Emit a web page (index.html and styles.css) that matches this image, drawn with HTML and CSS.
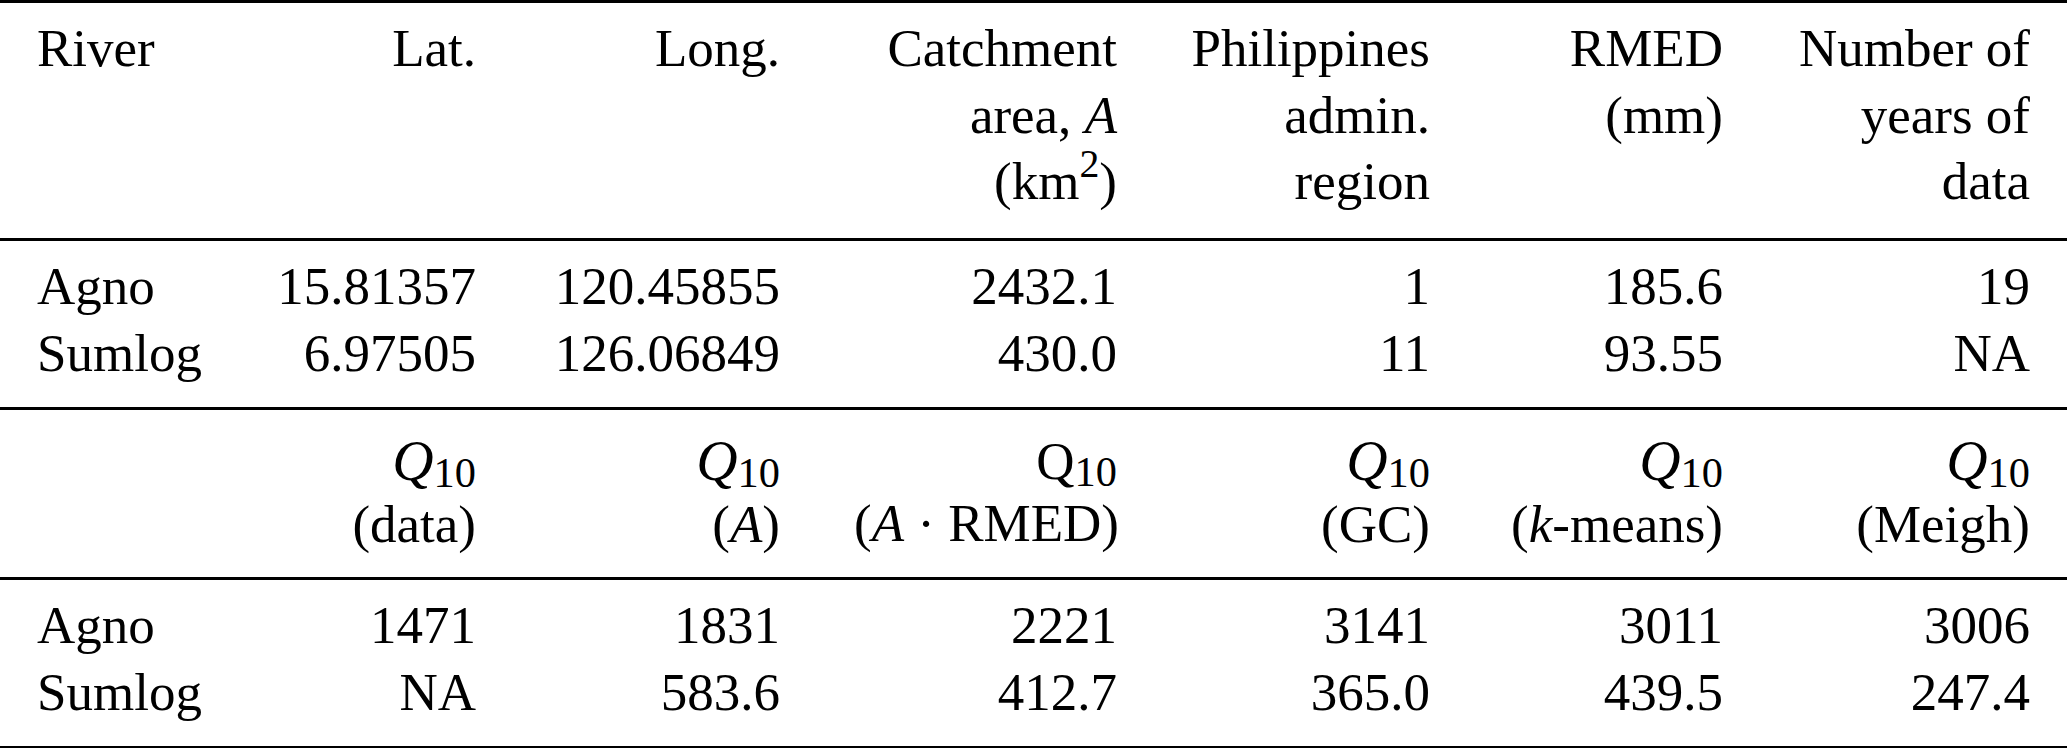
FILE: index.html
```html
<!DOCTYPE html>
<html lang="en">
<head>
<meta charset="utf-8">
<title>Rivers Q10</title>
<link rel="stylesheet" href="styles.css">
</head>
<body>
<table class="tbl">
  <thead>
    <tr class="hdr">
      <th class="left w-river">River</th>
      <th class="w-lat">Lat.</th>
      <th class="w-long">Long.</th>
      <th class="w-catch">Catchment<br>area, <i>A</i><br>(km<sup>2</sup>)</th>
      <th class="w-phil">Philippines<br>admin.<br>region</th>
      <th class="w-rmed">RMED<br>(mm)</th>
      <th class="w-num">Number of<br>years of<br>data</th>
    </tr>
  </thead>
  <tbody class="data">
    <tr class="first">
      <td class="left">Agno</td><td>15.81357</td><td>120.45855</td><td>2432.1</td><td>1</td><td>185.6</td><td>19</td>
    </tr>
    <tr class="last">
      <td class="left">Sumlog</td><td>6.97505</td><td>126.06849</td><td>430.0</td><td>11</td><td>93.55</td><td>NA</td>
    </tr>
  </tbody>
  <tbody class="qhead">
    <tr>
      <td class="left"></td>
      <td><span class="q"><i>Q</i><sub>10</sub></span><span class="qn">(data)</span></td>
      <td><span class="q"><i>Q</i><sub>10</sub></span><span class="qn">(<i>A</i>)</span></td>
      <td><span class="q">Q<sub>10</sub></span><span class="qn">(<i>A</i> · RMED)</span></td>
      <td><span class="q"><i>Q</i><sub>10</sub></span><span class="qn">(GC)</span></td>
      <td><span class="q"><i>Q</i><sub>10</sub></span><span class="qn">(<i>k</i>-means)</span></td>
      <td><span class="q"><i>Q</i><sub>10</sub></span><span class="qn">(Meigh)</span></td>
    </tr>
  </tbody>
  <tbody class="data end">
    <tr class="first">
      <td class="left">Agno</td><td>1471</td><td>1831</td><td>2221</td><td>3141</td><td>3011</td><td>3006</td>
    </tr>
    <tr class="last">
      <td class="left">Sumlog</td><td>NA</td><td>583.6</td><td>412.7</td><td>365.0</td><td>439.5</td><td>247.4</td>
    </tr>
  </tbody>
</table>
</body>
</html>
```
FILE: styles.css
```css
html, body {
  margin: 0;
  padding: 0;
  background: #ffffff;
}

body {
  font-family: "Liberation Serif", "Times New Roman", serif;
  font-size: 53px;
  color: #000000;
}

.tbl {
  width: 2067px;
  table-layout: fixed;
  border-collapse: separate;
  border-spacing: 0;
  line-height: 66.7px;
}

.tbl th,
.tbl td {
  padding: 0 37px;
  text-align: right;
  vertical-align: top;
  font-weight: normal;
  white-space: nowrap;
}

.tbl .left {
  text-align: left;
}

.w-river { width: 165px; }
.w-lat   { width: 200px; }
.w-long  { width: 230px; }
.w-catch { width: 263px; }
.w-phil  { width: 239px; }
.w-rmed  { width: 219px; }
.w-num   { width: 233px; }

.hdr th {
  border-top: 3px solid #000;
  padding-top: 12px;
  padding-bottom: 23px;
}

.data .first td {
  border-top: 3px solid #000;
  padding-top: 12px;
}

.data .last td {
  padding-bottom: 20px;
}

.data.end .last td {
  border-bottom: 3px solid #000;
}

.qhead td {
  border-top: 3px solid #000;
  padding-top: 22px;
  padding-bottom: 20px;
}

.q {
  display: block;
  line-height: 58px;
}

.q i {
  font-size: 1.08em;
}

.qn {
  display: block;
  line-height: 66.7px;
}

sub {
  font-size: 0.8em;
  line-height: 0;
  vertical-align: -0.16em;
}

sup {
  font-size: 0.75em;
  line-height: 0;
  vertical-align: 0.55em;
}

i {
  font-style: italic;
}
```
